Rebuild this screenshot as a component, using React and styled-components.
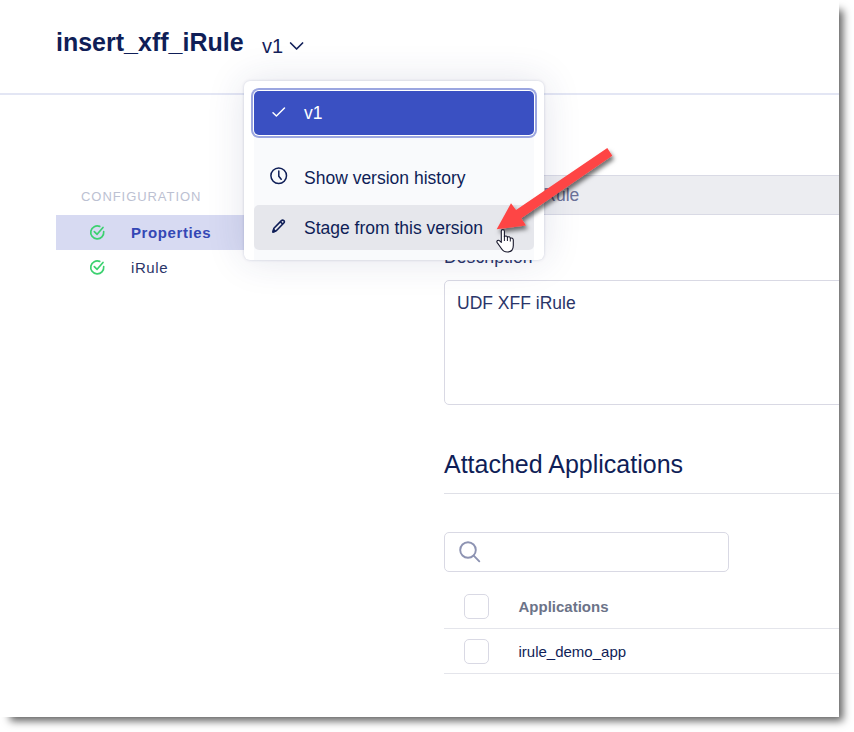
import React from "react";
import styled, { createGlobalStyle } from "styled-components";

const GlobalStyle = createGlobalStyle`
  * { box-sizing: border-box; }
  body { margin: 0; background: #fff; font-family: "Liberation Sans", Arial, sans-serif; color: #0f1e57; }
  h1, h2, p { margin: 0; }
  svg { display: block; }
`;

const Page = styled.div`
  height: 732px;
  overflow: hidden;
  background: #fff;
`;

const Window = styled.div`
  position: relative;
  width: 839px;
  height: 717px;
  background: #fff;
  box-shadow: 7px 7px 8px -3px rgba(0, 0, 0, 0.62);
`;

const Clip = styled.div`
  position: relative;
  height: 100%;
  overflow: hidden;
`;

const Header = styled.header`
  display: flex;
  align-items: flex-start;
  height: 95px;
  padding: 27px 0 0 56px;
  border-bottom: 2px solid #e3e6f4;
`;

const Title = styled.h1`
  font-size: 25px;
  line-height: 30px;
  font-weight: 700;
  white-space: nowrap;
`;

const VersionButton = styled.button`
  display: flex;
  align-items: center;
  gap: 6px;
  margin: 7px 0 0 18.5px;
  padding: 0;
  border: 0;
  background: none;
  color: #14225b;
  font: 20px/24px "Liberation Sans", Arial, sans-serif;
`;

const Body = styled.div`
  display: flex;
`;

const Sidebar = styled.nav`
  flex: none;
  width: 300px;
  margin: 93px 88px 0 56px;
`;

const SidebarHeading = styled.p`
  height: 27px;
  padding-left: 25px;
  font-size: 13px;
  line-height: 17px;
  letter-spacing: 0.94px;
  color: #bcc1d2;
`;

const SidebarItem = styled.div`
  display: flex;
  align-items: center;
  gap: 25.5px;
  height: 35px;
  padding-left: 32.5px;
  font-size: 15px;
  letter-spacing: 0.6px;
  font-weight: ${(p) => (p.$active ? 700 : 400)};
  color: ${(p) => (p.$active ? "#3447b5" : "#2a3569")};
  background: ${(p) => (p.$active ? "#d7daf2" : "transparent")};
`;

const Content = styled.main`
  flex: none;
  width: 420px;
  padding-top: 44px;
`;

const Label = styled.div`
  height: ${(p) => p.$height}px;
  font-size: 17.5px;
  line-height: 24px;
  letter-spacing: 0.1px;
  color: #2a3569;
`;

const NameField = styled.div`
  height: 40px;
  margin-bottom: 30px;
  padding: 0 14px;
  border: 1px solid #d9dae5;
  border-radius: 5px;
  background: #ecedf1;
  font-size: 17.5px;
  line-height: 38px;
  color: #6b7299;
`;

const DescriptionField = styled.div`
  height: 125px;
  padding: 9px 12px;
  border: 1px solid #d9d9e4;
  border-radius: 5px;
  font-size: 17.5px;
  line-height: 26px;
  color: #2a3569;
`;

const SectionTitle = styled.h2`
  height: 55px;
  margin: 34px 0 38px;
  padding-top: 10px;
  border-bottom: 1px solid #dfe0e7;
  font-size: 25px;
  line-height: 30px;
  font-weight: 400;
`;

const SearchBox = styled.div`
  display: flex;
  align-items: center;
  width: 285px;
  height: 40px;
  margin-bottom: 12px;
  padding-left: 14px;
  border: 1px solid #d9d9e4;
  border-radius: 5px;
`;

const TableRow = styled.div`
  display: flex;
  align-items: center;
  gap: 29.5px;
  height: 45px;
  padding-left: 20px;
  border-bottom: 1px solid #e4e5eb;
  font-size: 15px;
  font-weight: ${(p) => (p.$head ? 700 : 400)};
  color: ${(p) => (p.$head ? "#6c7388" : "#0f1e57")};
`;

const Checkbox = styled.span`
  width: 25px;
  height: 25px;
  border: 1px solid #d9d9e4;
  border-radius: 5px;
`;

const Menu = styled.div`
  position: absolute;
  left: 244px;
  top: 81px;
  width: 300px;
  height: 179px;
  padding: 10px 10px 0;
  border-radius: 6px;
  background: #fff;
  box-shadow: 0 0 3px rgba(40, 48, 110, 0.2), 0 0 38px rgba(40, 48, 110, 0.13);
`;

const MenuList = styled.div`
  height: 169px;
  background: #f9fafc;
`;

const MenuItem = styled.div`
  display: flex;
  align-items: center;
  gap: 16px;
  height: 45px;
  margin-bottom: 5px;
  padding: 1px 0 0 16px;
  border-radius: 5px;
  font-size: 17.5px;
  white-space: nowrap;
  background: ${(p) => (p.$hover ? "#e6e7ec" : "transparent")};

  svg { margin-bottom: 4px; }
`;

const SelectedItem = styled(MenuItem)`
  height: 44px;
  margin-bottom: 20px;
  padding-top: 0;
  background: #3a50c2;
  color: #fff;
  box-shadow: 0 0 0 1px #fff, 0 0 0 3px #9ba6e0;

  svg { margin-bottom: 2px; }
`;

const Pointer = styled.svg`
  position: absolute;
  left: 484px;
  top: 137px;
`;

function Success() {
  return (
    <svg width="17" height="17" viewBox="0 0 17 17" fill="none" stroke="#3bd16f" strokeWidth="1.7" strokeLinecap="round" strokeLinejoin="round">
      <path d="M10.7 2.4A6.5 6.5 0 1 0 14.7 7.7" />
      <path d="M5.3 7.6 8.1 10.3 14 3.5" />
    </svg>
  );
}

function Check() {
  return (
    <svg width="18" height="18" viewBox="0 0 18 18" fill="none" stroke="currentColor" strokeWidth="1.5" strokeLinecap="round" strokeLinejoin="round">
      <path d="M3 9.7 6.4 13 14.5 5" />
    </svg>
  );
}

function Clock() {
  return (
    <svg width="18" height="18" viewBox="0 0 18 18" fill="none" stroke="currentColor" strokeWidth="1.5" strokeLinecap="round" strokeLinejoin="round">
      <circle cx="8.7" cy="8.8" r="7.8" />
      <path d="M8.8 4.1V9.2L11.2 12.3" />
    </svg>
  );
}

function Pencil() {
  return (
    <svg width="18" height="18" viewBox="0 0 18 18" fill="none" stroke="currentColor" strokeWidth="1.6" strokeLinejoin="round">
      <path d="M3 15 3.9 11.2 11.4 3.6Q12.6 2.5 13.8 3.6 15 4.8 13.8 6L6.3 13.7Z" />
      <path d="M10.4 4.8 12.7 7" />
      <path d="M3 15 3.7 12.5 5.3 14.2Z" fill="currentColor" />
    </svg>
  );
}

export default function App() {
  return (
    <Page>
      <GlobalStyle />
      <Window>
        <Clip>
          <Header>
            <Title>insert_xff_iRule</Title>
            <VersionButton>
              v1
              <svg width="15" height="10" viewBox="0 0 15 10" fill="none" stroke="currentColor" strokeWidth="1.7" strokeLinecap="round" strokeLinejoin="round">
                <path d="M1.6 2 7.6 8 13.6 2" />
              </svg>
            </VersionButton>
          </Header>
          <Body>
            <Sidebar>
              <SidebarHeading>CONFIGURATION</SidebarHeading>
              <SidebarItem $active><Success />Properties</SidebarItem>
              <SidebarItem><Success />iRule</SidebarItem>
            </Sidebar>
            <Content>
              <Label $height={36}>Name</Label>
              <NameField>insert_xff_iRule</NameField>
              <Label $height={35}>Description</Label>
              <DescriptionField>UDF XFF iRule</DescriptionField>
              <SectionTitle>Attached Applications</SectionTitle>
              <SearchBox>
                <svg width="22" height="22" viewBox="0 0 22 22" fill="none" stroke="#8d93b2" strokeWidth="1.9" strokeLinecap="round">
                  <circle cx="9" cy="9" r="7.8" />
                  <path d="M14.7 14.7 20.3 20.3" />
                </svg>
              </SearchBox>
              <TableRow $head><Checkbox />Applications</TableRow>
              <TableRow><Checkbox />irule_demo_app</TableRow>
            </Content>
          </Body>
          <Menu>
            <MenuList>
              <SelectedItem><Check />v1</SelectedItem>
              <MenuItem><Clock />Show version history</MenuItem>
              <MenuItem $hover><Pencil />Stage from this version</MenuItem>
            </MenuList>
          </Menu>
          <Pointer width="142" height="122" viewBox="484 137 142 122">
            <defs>
              <filter id="arrowShadow" x="-20%" y="-20%" width="140%" height="150%">
                <feDropShadow dx="2" dy="3.5" stdDeviation="2" floodColor="#000" floodOpacity="0.55" />
              </filter>
            </defs>
            <path filter="url(#arrowShadow)" fill="#fe4545" d="M496.7 229.3 511 203.3 516 210 607.3 148 612.3 155.7 521.3 218.3 526 225.5Z" />
            <path
              fill="#fff" stroke="#17172b" strokeWidth="1.1" strokeLinejoin="round"
              d="M501.3 231.3C501.3 229 504.4 229 504.4 231.3V236.7C505.2 235.5 507.1 235.8 507.4 237.2 508.5 236.3 510.1 236.8 510.3 238.3 511.7 237.6 513.3 238.3 513.3 240V245.6C513.3 249.8 510.7 252 507.4 252 504.1 252 502.5 250.5 501.2 248.2L497.2 242.6C496.1 240.9 498.3 239.4 499.7 240.8L501.3 242.3Z"
            />
            <path fill="none" stroke="#17172b" strokeWidth="1" d="M504.4 236V241M507.4 237V241M510.3 238V241.5" />
          </Pointer>
        </Clip>
      </Window>
    </Page>
  );
}
